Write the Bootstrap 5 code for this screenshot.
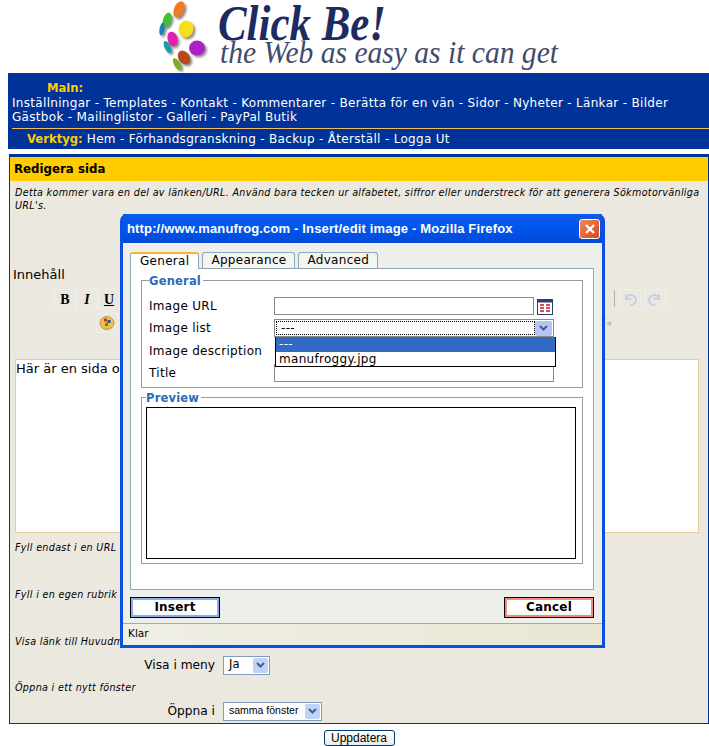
<!DOCTYPE html>
<html lang="sv">
<head>
<meta charset="utf-8">
<title>Redigera sida</title>
<link href="https://cdn.jsdelivr.net/npm/bootstrap@5.3.3/dist/css/bootstrap.min.css" rel="stylesheet">
<style>
  html, body { height: 746px; overflow: hidden; }
  body { background: #fff; font-family: "DejaVu Sans", Verdana, sans-serif; font-size: 12px; color: #000; padding-left: 8px; }
  .logo-wrap { height: 73px; padding-left: 142px; }
  .pill-set { filter: drop-shadow(2px 2px 1px rgba(0,0,0,.45)); }
  .top-menu { background: #003399; height: 76px; color: #fff; padding: 8px 0 0 4px; font-size: 12px; line-height: 14.5px; letter-spacing: .31px; }
  .top-menu b { color: #ffcc00; letter-spacing: 0; font-size: 11.600px; }
  .main-head { padding-left: 35px; }
  .tool-row { border-top: 1px solid #f0c060; margin-top: 3px; padding: 3px 0 0 15px; }
  .edit-panel { margin: 5px 0 0 1px; height: 570px; background: #ebe8e0; border: 1px solid #003399; border-top-width: 3px; position: relative; }
  .panel-head { background: #ffcc00; height: 24px; padding: 5px 4px; font-weight: 700; font-size: 11.800px; line-height: 15px; }
  .hint { font-style: italic; font-size: 9.6px; line-height: 13px; padding: 0 5px; letter-spacing: .31px; }
  .hint-top { padding-top: 5px; height: 85px; }
  .label-plain { padding-left: 3px; font-size: 13px; line-height: 18px; }
  .bar-row { height: 24px; padding-top: 5px; padding-right: 42px; }
  .bar-first { padding-left: 44px; }
  .bar-btn { width: 22px; height: 20px; border: 1px solid #f0eee8; display: flex; align-items: center; justify-content: center; font-family: "Liberation Serif", serif; font-size: 14px; font-weight: 700; }
  .bar-sep { width: 1px; height: 17px; background: #b0b0b0; margin: 0 4px 0 0; }
  .bar-gap { width: 3px; }
  .palette-cell { margin-left: 86px; }
  .fade-glyph { font-size: 10px; color: #b4bccb; margin-right: 55px; }
  .editor-box { margin: 27px 9px 0 5px; height: 174px; background: #fff; border: 1px solid #e8c9a0; padding: 1px 0; font-size: 13px; line-height: 16px; }
  .hint-first { padding-top: 8px; }
  .hint-next { padding-top: 34px; }
  .hint-last { padding-top: 4px; }
  .fake-select { display: inline-flex; align-items: center; justify-content: space-between; background: #fff; border: 1px solid #7f9db9; height: 19px; padding: 1px 1px 1px 5px; white-space: nowrap; }
  .select-ja { width: 47px; font-size: 11.500px; }
  .select-win { width: 99px; font-family: "Liberation Sans", Arial, sans-serif; font-size: 10.500px; }
  .arrow-box { width: 15px; height: 15px; flex: none; background: #c1d2f8; border-radius: 2px; display: flex; align-items: center; justify-content: center; }
  .field-row { display: flex; align-items: center; justify-content: flex-end; gap: 4px; font-size: 12.200px; height: 24px; margin-top: 5px; }
  .row-meny { width: 260px; }
  .row-open { width: 312px; }
  .update-row { text-align: center; padding-top: 6px; }
  .update-btn { height: 16px; width: 71px; padding: 0; font-size: 12px; line-height: 13px; font-family: "Liberation Sans", Arial, sans-serif; background: linear-gradient(#fff, #ecebe5); border: 1px solid #003c74; border-radius: 3px; color: #000; vertical-align: top; margin-left: 1px; }

  .popup-win { position: absolute; left: 120px; top: 214px; width: 485px; height: 434px; background: #0a4fe0; border-radius: 7px 7px 0 0; padding: 0 3px 3px; display: flex; flex-direction: column; }
  .popup-title { height: 29px; flex: none; background: linear-gradient(#0a5be8, #0058ee 40%, #0349d8); color: #fff; font-family: "Liberation Sans", Arial, sans-serif; font-weight: 700; font-size: 13px; letter-spacing: .15px; }
  .popup-close { width: 21px; height: 20px; background: linear-gradient(135deg, #f08a60, #dc4416); border: 1px solid #fff; border-radius: 3px; display: flex; align-items: center; justify-content: center; margin-right: 2px; }
  .popup-body { flex: 1; background: #eeeeea; padding: 9px 8px 0 7px; font-size: 12px; letter-spacing: .3px; }
  .tab-line { display: flex; gap: 3px; height: 16px; position: relative; z-index: 1; }
  .tab-item { height: 16px; border: 1px solid #91a7b4; border-bottom: 0; border-radius: 3px 3px 0 0; padding: 0 8px; line-height: 15px; background: #f5f5f0; }
  .tab-on { background: #fff; height: 17px; border-color: #91a7b4; border-top: 2px solid #ffb02e; padding: 0 9px; line-height: 14px; }
  .tab-body { background: #fff; border: 1px solid #91a7b4; height: 322px; padding: 4px 10px 0; }
  .set-box { border: 1px solid #9a9a9a; padding: 0 7px; margin: 0; position: relative; }
  .set-box legend { float: none; width: auto; font-size: 11.500px; font-weight: 700; color: #2b6cb8; margin: 0; padding: 0 2px 0 0; line-height: 14px; letter-spacing: .2px; position: relative; top: 1px; }
  .set-general { height: 115px; padding-top: 8px; }
  .set-preview { height: 174px; margin-top: 2px; padding: 3px 6px 0 4px; }
  .form-line { display: flex; align-items: center; height: 22.300px; }
  .form-line > span:first-child { width: 125px; flex: none; }
  .line-input { width: 260px; height: 18px; border: 1px solid #8a8a8a; background: #fff; }
  .line-wide { width: 280px; }
  .browse-ico { width: 18px; height: 18px; margin-left: 2px; }
  .list-select { width: 280px; height: 18px; border: 1px solid #8a8a8a; display: flex; justify-content: space-between; align-items: center; padding: 1px; }
  .list-select .arrow-box { width: 17px; background: #b4c6f4; }
  .list-cur { flex: 1; border: 1px dotted #000; height: 14px; line-height: 13px; padding-left: 4px; }
  .list-drop { position: absolute; left: 133px; top: 50px; width: 281px; height: 30px; background: #fff; border: 1px solid #000; border-top: 0; line-height: 15px; z-index: 3; }
  .list-drop div { padding-left: 3px; height: 15px; }
  .list-drop .on { background: #316ac5; color: #fff; }
  .preview-frame { height: 152px; border: 1px solid #000; }
  .btn-line { padding-top: 7px; display: flex; justify-content: space-between; }
  .dlg-btn { width: 90px; height: 21px; border: 1px solid #000; background: linear-gradient(#fff 60%, #f4f4f4); font-family: "DejaVu Sans", sans-serif; font-size: 12px; font-weight: 700; padding: 0; letter-spacing: .2px; line-height: 15px; }
  .dlg-ok { box-shadow: inset 0 0 0 2px #8aaee8; }
  .dlg-no { box-shadow: inset 0 0 0 2px #f08a80; }
  .status-line { margin: 5px -8px 0 -7px; height: 21px; background: linear-gradient(90deg, #f0efe6, #e9e6d2); border-top: 1px solid #a8a8a0; padding-left: 5px; font-size: 10.5px; line-height: 19px; letter-spacing: 0; }
</style>
</head>
<body>

<div class="logo-wrap">
  <svg width="420" height="73" viewBox="150 0 420 73">
    <g class="pill-set">
      <ellipse cx="179" cy="9.500" rx="5" ry="8.500" transform="rotate(22 179 9.500)" fill="#f07a20"/>
      <ellipse cx="167" cy="20" rx="4" ry="7.500" transform="rotate(18 167 20)" fill="#44c030"/>
      <ellipse cx="162" cy="29" rx="2.500" ry="6.500" transform="rotate(10 162 29)" fill="#1d7fb8"/>
      <ellipse cx="186" cy="29" rx="7.500" ry="8.500" transform="rotate(12 186 29)" fill="#f4e020"/>
      <ellipse cx="172.500" cy="39" rx="5" ry="7.500" transform="rotate(-15 172.500 39)" fill="#e020b0"/>
      <ellipse cx="197" cy="48" rx="8" ry="7.500" fill="#b020c8"/>
      <ellipse cx="167.500" cy="47" rx="3" ry="6.500" transform="rotate(-25 167.500 47)" fill="#18a0a0"/>
      <ellipse cx="184" cy="57.500" rx="5.500" ry="7.500" transform="rotate(-35 184 57.500)" fill="#b84a18"/>
      <ellipse cx="177" cy="64" rx="3" ry="6.500" transform="rotate(-30 177 64)" fill="#78b020"/>
    </g>
    <text x="218" y="40" textLength="168" lengthAdjust="spacingAndGlyphs" font-family="Liberation Serif" font-style="italic" font-weight="700" font-size="51" fill="#1d2b63">Click Be!</text>
    <text x="220" y="63" textLength="338" lengthAdjust="spacingAndGlyphs" font-family="Liberation Serif" font-style="italic" font-size="31" fill="#414b6b">the Web as easy as it can get</text>
  </svg>
</div>

<div class="top-menu">
  <div class="main-head"><b>Main:</b></div>
  <div>Inställningar - Templates - Kontakt - Kommentarer - Berätta för en vän - Sidor - Nyheter - Länkar - Bilder</div>
  <div>Gästbok - Mailinglistor - Galleri - PayPal Butik</div>
  <div class="tool-row"><b>Verktyg:</b> Hem - Förhandsgranskning - Backup - Återställ - Logga Ut</div>
</div>

<div class="edit-panel">
  <div class="panel-head">Redigera sida</div>
  <div class="hint hint-top">Detta kommer vara en del av länken/URL. Använd bara tecken ur alfabetet, siffror eller understreck för att generera Sökmotorvänliga URL's.</div>
  <div class="label-plain">Innehåll</div>
  <div class="d-flex justify-content-between bar-row bar-first">
    <div class="d-flex">
      <div class="bar-btn">B</div>
      <div class="bar-btn fst-italic">I</div>
      <div class="bar-btn text-decoration-underline">U</div>
    </div>
    <div class="d-flex align-items-center">
      <div class="bar-sep"></div>
      <div class="bar-btn">
        <svg width="16" height="14" viewBox="0 0 16 14" fill="none" stroke="#c4d0e4" stroke-width="2"><path d="M4 2v5h5M4 7a5 5 0 1 1 4 6"/></svg>
      </div>
      <div class="bar-gap"></div>
      <div class="bar-btn">
        <svg width="16" height="14" viewBox="0 0 16 14" fill="none" stroke="#c4d0e4" stroke-width="2"><path d="M12 2v5H7M12 7a5 5 0 1 0-4 6"/></svg>
      </div>
    </div>
  </div>
  <div class="d-flex justify-content-between bar-row">
    <div class="d-flex palette-cell">
      <div class="bar-btn">
        <svg width="16" height="16" viewBox="0 0 16 16"><ellipse cx="8" cy="8" rx="7" ry="6.500" fill="#f0c040" stroke="#a08030" stroke-width=".7"/><rect x="5" y="3.500" width="3" height="3" fill="#d83020"/><rect x="8.500" y="5" width="3" height="3" fill="#2050c0"/><rect x="6" y="8" width="3" height="3" fill="#30a030"/></svg>
      </div>
    </div>
    <div class="d-flex align-items-center fade-glyph">T◂</div>
  </div>
  <div class="editor-box">Här är en sida om mig</div>
  <div class="hint hint-first">Fyll endast i en URL</div>
  <div class="hint hint-next">Fyll i en egen rubrik</div>
  <div class="hint hint-next">Visa länk till Huvudmeny</div>
  <div class="field-row row-meny">Visa i meny <span class="fake-select ms-1 select-ja"><span>Ja</span><span class="arrow-box"><svg width="9" height="7" viewBox="0 0 9 7"><path d="M1 1l3.500 3.500L8 1" fill="none" stroke="#40608c" stroke-width="2"/></svg></span></span></div>
  <div class="hint hint-last">Öppna i ett nytt fönster</div>
  <div class="field-row row-open">Öppna i <span class="fake-select ms-1 select-win"><span>samma fönster</span><span class="arrow-box"><svg width="9" height="7" viewBox="0 0 9 7"><path d="M1 1l3.500 3.500L8 1" fill="none" stroke="#40608c" stroke-width="2"/></svg></span></span></div>
</div>

<div class="update-row"><button class="update-btn">Uppdatera</button></div>

<div class="popup-win">
  <div class="popup-title d-flex align-items-center justify-content-between ps-1">
    <span>http://www.manufrog.com - Insert/edit image - Mozilla Firefox</span>
    <span class="popup-close">
      <svg width="12" height="12" viewBox="0 0 12 12"><path d="M2 2l8 8M10 2l-8 8" stroke="#fff" stroke-width="2.400"/></svg>
    </span>
  </div>
  <div class="popup-body">
    <div class="tab-line">
      <div class="tab-item tab-on">General</div>
      <div class="tab-item">Appearance</div>
      <div class="tab-item">Advanced</div>
    </div>
    <div class="tab-body">
      <fieldset class="set-box set-general">
        <legend>General</legend>
        <div class="form-line"><span>Image URL</span><span class="line-input"></span>
          <span class="browse-ico"><svg width="18" height="18" viewBox="0 0 18 18"><rect x="1.500" y="1.500" width="15" height="15" fill="#fff" stroke="#2b3f6b"/><rect x="1.500" y="1.500" width="15" height="3" fill="#2b3f6b"/><path d="M4 7h4M10 7h4M4 10h4M10 10h4M4 13h4M10 13h4" stroke="#c01818" stroke-width="1.600"/></svg></span>
        </div>
        <div class="form-line"><span>Image list</span>
          <span class="list-select"><span class="list-cur">---</span><span class="arrow-box"><svg width="9" height="7" viewBox="0 0 9 7"><path d="M1 1l3.500 3.500L8 1" fill="none" stroke="#40608c" stroke-width="2"/></svg></span></span>
        </div>
        <div class="form-line"><span>Image description</span></div>
        <div class="form-line"><span>Title</span><span class="line-input line-wide"></span></div>
        <div class="list-drop"><div class="on">---</div><div>manufroggy.jpg</div></div>
      </fieldset>
      <fieldset class="set-box set-preview">
        <legend>Preview</legend>
        <div class="preview-frame"></div>
      </fieldset>
    </div>
    <div class="btn-line">
      <button class="dlg-btn dlg-ok">Insert</button>
      <button class="dlg-btn dlg-no">Cancel</button>
    </div>
    <div class="status-line">Klar</div>
  </div>
</div>

<script src="https://cdn.jsdelivr.net/npm/bootstrap@5.3.3/dist/js/bootstrap.bundle.min.js"></script>
</body>
</html>
